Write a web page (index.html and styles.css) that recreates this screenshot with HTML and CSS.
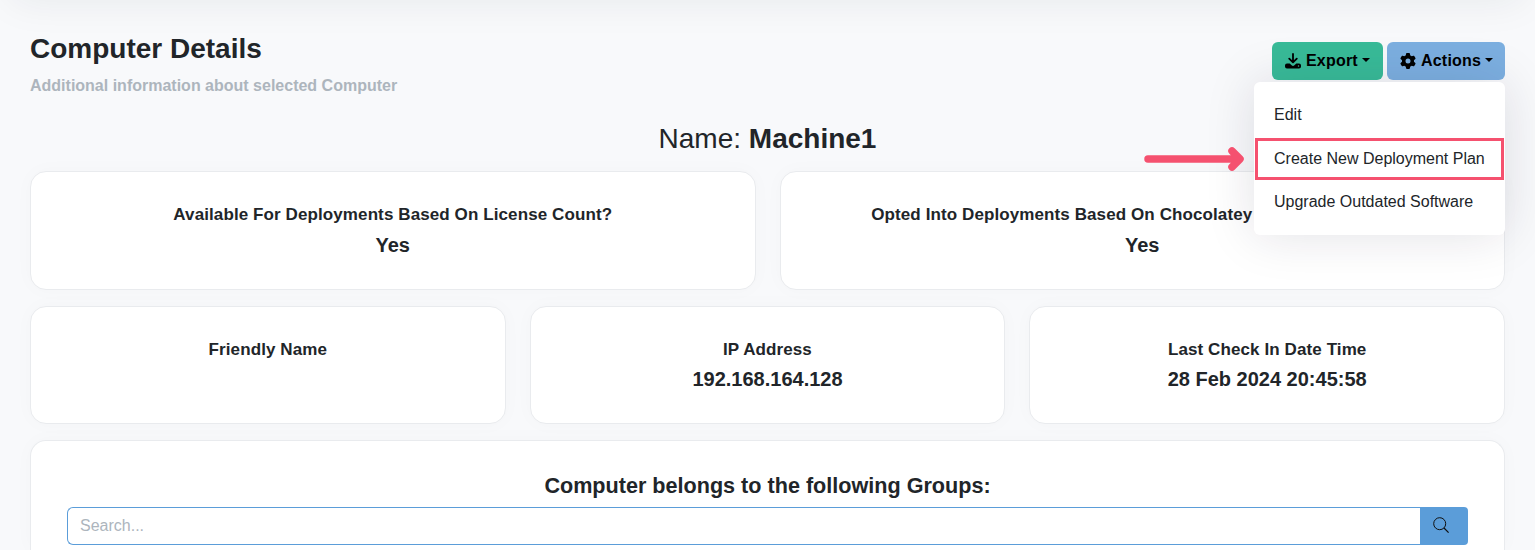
FILE: index.html
```html
<!DOCTYPE html>
<html lang="en">
<head>
<meta charset="utf-8">
<title>Computer Details</title>
<link rel="stylesheet" href="styles.css">
</head>
<body>
<div class="topbar"></div>
<main class="page">
  <header class="header">
    <div>
      <h1 class="title">Computer Details</h1>
      <p class="subtitle">Additional information about selected Computer</p>
    </div>
    <div class="buttons">
      <button class="btn btn-export"><svg class="icon" viewBox="0 0 16 16"><path d="M8 .9v8.300M4.200 5.600 8 9.400 11.800 5.600" fill="none" stroke="currentColor" stroke-width="1.800" stroke-linecap="round" stroke-linejoin="round"/><path d="M2 10.500h2.700l1.900 1.800a1.900 1.900 0 0 0 2.800 0l1.900-1.800H14a2 2 0 0 1 2 2v1a2 2 0 0 1-2 2H2a2 2 0 0 1-2-2v-1a2 2 0 0 1 2-2zm11.500 1.800a.75.75 0 1 0 0 1.500.75.75 0 0 0 0-1.500z" fill="currentColor"/></svg>Export<span class="caret"></span></button>
      <button class="btn btn-actions"><svg class="icon" viewBox="0 0 512 512"><path fill="currentColor" d="M495.900 166.600c3.200 8.700.5 18.400-6.400 24.600l-43.300 39.400c1.100 8.300 1.700 16.800 1.700 25.400s-.6 17.100-1.700 25.400l43.300 39.400c6.900 6.200 9.600 15.900 6.400 24.600-4.400 11.900-9.700 23.300-15.800 34.300l-4.700 8.100c-6.600 11-14 21.400-22.100 31.200-5.900 7.200-15.700 9.600-24.500 6.800l-55.700-17.700c-13.400 10.300-28.200 18.900-44 25.400l-12.500 57.100c-2 9.100-9 16.300-18.200 17.800-13.800 2.300-28 3.500-42.500 3.500s-28.700-1.200-42.500-3.500c-9.200-1.500-16.200-8.700-18.200-17.800l-12.500-57.100c-15.800-6.500-30.600-15.100-44-25.400l-55.600 17.800c-8.800 2.800-18.600.3-24.500-6.800-8.100-9.800-15.500-20.200-22.100-31.200l-4.700-8.100c-6.100-11-11.400-22.400-15.800-34.300-3.200-8.700-.5-18.400 6.400-24.600l43.300-39.400c-1.100-8.400-1.700-16.900-1.700-25.500s.6-17.100 1.700-25.400L22.400 191.200c-6.900-6.200-9.600-15.900-6.400-24.600 4.400-11.900 9.700-23.300 15.800-34.300l4.700-8.100c6.600-11 14-21.400 22.100-31.200 5.900-7.200 15.700-9.600 24.500-6.800l55.700 17.700c13.400-10.300 28.200-18.900 44-25.400l12.500-57.100c2-9.100 9-16.300 18.200-17.800C227.300 1.200 241.500 0 256 0s28.700 1.200 42.500 3.500c9.200 1.500 16.200 8.700 18.200 17.800l12.500 57.100c15.800 6.500 30.600 15.100 44 25.400l55.700-17.700c8.800-2.800 18.600-.3 24.500 6.800 8.100 9.800 15.500 20.200 22.100 31.200l4.700 8.100c6.100 11 11.400 22.400 15.800 34.300zM256 336a80 80 0 1 0 0-160 80 80 0 0 0 0 160z"/></svg>Actions<span class="caret"></span></button>
      <nav class="menu">
        <a class="item">Edit</a>
        <a class="item selected">Create New Deployment Plan</a>
        <a class="item">Upgrade Outdated Software</a>
        <svg class="arrow" viewBox="0 0 102 26"><path d="M5 13H94M89 5l8 8-8 8" fill="none" stroke="#f5516f" stroke-width="7.500" stroke-linecap="round" stroke-linejoin="round"/></svg>
      </nav>
    </div>
  </header>
  <h2 class="name">Name: <b>Machine1</b></h2>
  <section class="row two">
    <article class="card"><h3 class="label">Available For Deployments Based On License Count?</h3><p class="value">Yes</p></article>
    <article class="card"><h3 class="label label-covered">Opted Into Deployments Based On Chocolatey</h3><p class="value">Yes</p></article>
  </section>
  <section class="row three">
    <article class="card"><h3 class="label">Friendly Name</h3></article>
    <article class="card"><h3 class="label">IP Address</h3><p class="value">192.168.164.128</p></article>
    <article class="card"><h3 class="label">Last Check In Date Time</h3><p class="value">28 Feb 2024 20:45:58</p></article>
  </section>
  <section class="card groups">
    <h3 class="groups-title">Computer belongs to the following Groups:</h3>
    <div class="search">
      <input class="search-input" type="text" placeholder="Search...">
      <button class="search-btn" aria-label="Search"><svg class="search-icon" viewBox="0 0 16 16"><circle cx="6.700" cy="6.700" r="6" fill="none" stroke="currentColor"/><path d="M11 11l4.600 4.600" stroke="currentColor" stroke-width="1.200"/></svg></button>
    </div>
  </section>
</main>
</body>
</html>
```
FILE: styles.css
```css
* { box-sizing: border-box; }
html, body { height: 100%; }
body { margin: 0; overflow: hidden; background: #f8f9fb; color: #212529; font-family: "Liberation Sans", Arial, sans-serif; }
h1, h2, h3, p { margin: 0; }
button, input { font-family: inherit; }
.topbar { display: flow-root; height: 0; margin: 0 12px; }
.topbar::before { content: ""; display: block; height: 50px; margin-top: -50px; box-shadow: 0 0 40px rgba(29, 33, 45, .08); }
.page { padding: 31px 30px 0; }
.header { display: flex; justify-content: space-between; align-items: flex-start; height: 88px; }
.title { font-size: 28px; line-height: 36px; font-weight: 700; }
.subtitle { margin-top: 7px; font-size: 16px; line-height: 24px; font-weight: 700; color: #adb5bd; }
.buttons { position: relative; display: flex; gap: 4px; margin-top: 11px; }
.btn { display: flex; align-items: center; height: 38px; padding: 0 13px; border: 0; border-radius: 6px; color: #000; font-size: 16px; font-weight: 700; letter-spacing: .2px; white-space: nowrap; }
.btn-export { width: 111px; background: #38bb98; }
.btn-actions { width: 118px; background: #7cafe0; }
.icon { width: 16px; height: 16px; margin-right: 5px; flex: none; }
.caret { margin: -2px 0 0 4px; border: 4px solid transparent; border-top-color: #000; border-bottom: 0; }
.menu { position: absolute; z-index: 2; top: 40px; right: 0; width: 251px; height: 153px; padding: 12px 0; background: #fff; border-radius: 6px; box-shadow: 0 0 50px rgba(29, 20, 55, .13); }
.item { display: block; height: 43px; padding-left: 20px; font-size: 16px; line-height: 41px; }
.selected { height: 42px; margin: 1px 1px; padding-left: 16px; border: 3px solid #f5516f; line-height: 36px; }
.arrow { position: absolute; left: -111px; top: 64px; width: 102px; height: 26px; }
.name { height: 52px; font-size: 28px; line-height: 39px; font-weight: 400; text-align: center; }
.name b { font-weight: 700; }
.row { display: grid; gap: 24px; margin-bottom: 16px; }
.two { grid-template-columns: 1fr 1fr; }
.three { grid-template-columns: 1fr 1fr 1fr; }
.card { padding-top: 31px; background: #fff; border: 1px solid #e9ebee; border-radius: 16px; box-shadow: 0 0 20px rgba(29, 33, 45, .025); text-align: center; }
.two .card { height: 119px; }
.three .card { height: 118px; }
.label { font-size: 17px; line-height: 24px; letter-spacing: .1px; }
.label-covered { padding-right: 161px; white-space: nowrap; }
.value { margin-top: 4px; font-size: 20px; line-height: 28px; font-weight: 700; }
.three .value { margin-top: 3px; }
.groups { height: 110px; padding: 30px 36px 0; border-bottom: 0; border-radius: 16px 16px 0 0; }
.groups-title { font-size: 21.6px; line-height: 30px; }
.search { display: flex; height: 38px; margin-top: 6px; }
.search-input { flex: 1; padding: 0 12px; border: 1px solid #5b9dd9; border-right: 0; border-radius: 6px 0 0 6px; background: #fff; font-size: 16px; }
.search-input::placeholder { color: #adb5bd; }
.search-btn { display: flex; align-items: center; width: 48px; padding: 0 0 2px 13px; border: 0; border-radius: 0 4px 4px 0; background: #5b9dd9; color: #111; }
.search-icon { width: 16px; height: 16px; }
```
